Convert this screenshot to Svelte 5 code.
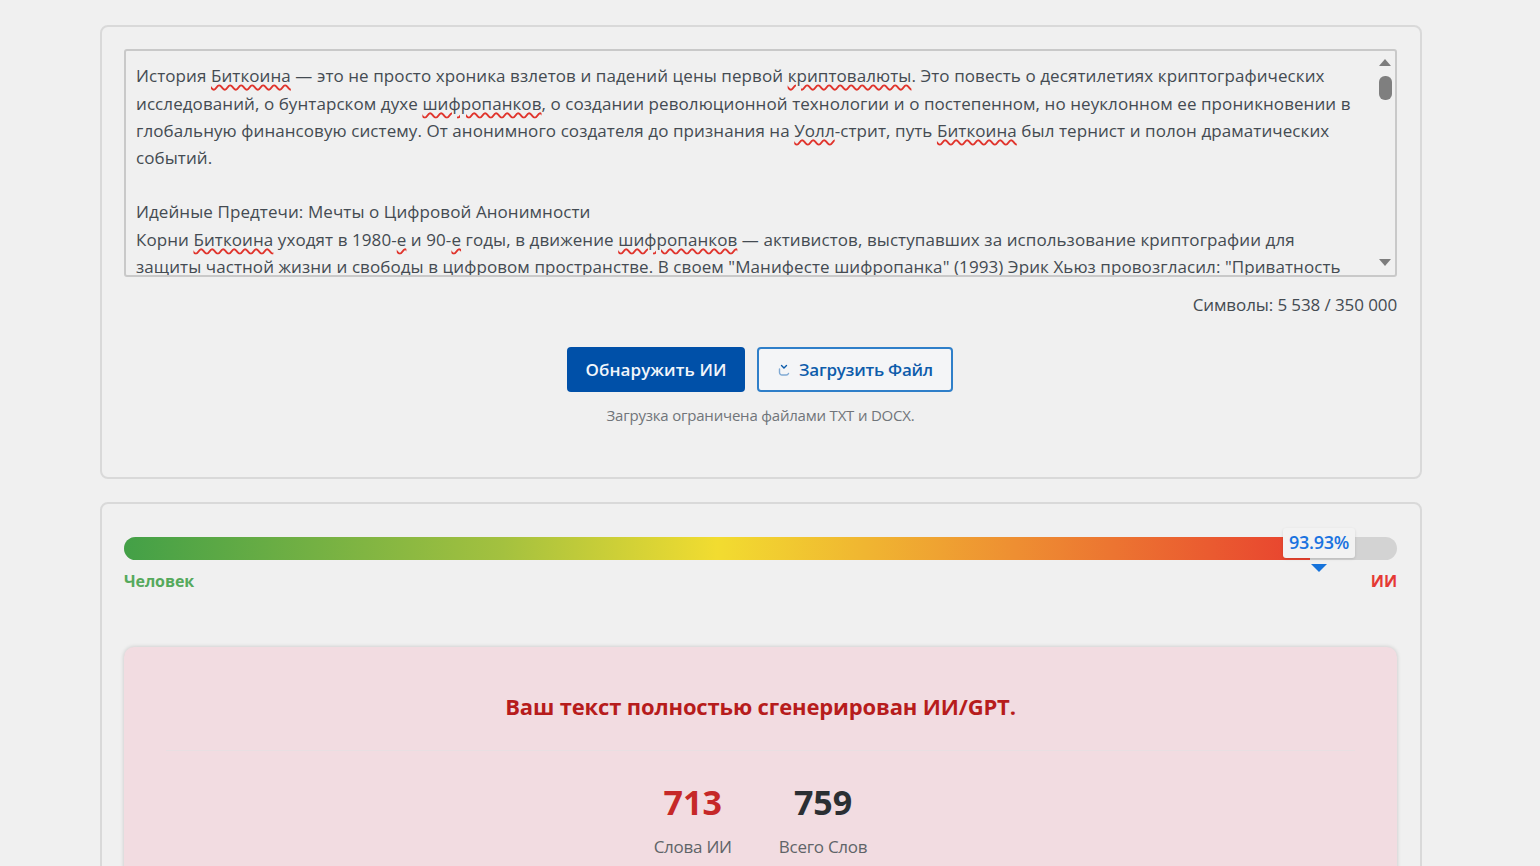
<script>
  const lines = [
    [['История '],['Биткоина',1],[' — это не просто хроника взлетов и падений цены первой '],['криптовалюты',1],['. Это повесть о десятилетиях криптографических']],
    [['исследований, о бунтарском духе '],['шифропанков',1],[', о создании революционной технологии и о постепенном, но неуклонном ее проникновении в']],
    [['глобальную финансовую систему. От анонимного создателя до признания на '],['Уолл',1],['-стрит, путь '],['Биткоина',1],[' был тернист и полон драматических']],
    [['событий.']],
    [['\u00a0']],
    [['Идейные Предтечи: Мечты о Цифровой Анонимности']],
    [['Корни '],['Биткоина',1],[' уходят в 1980-'],['е',1],[' и 90-'],['е',1],[' годы, в движение '],['шифропанков',1],[' — активистов, выступавших за использование криптографии для']],
    [['защиты частной жизни и свободы в цифровом пространстве. В своем "Манифесте шифропанка" (1993) Эрик Хьюз провозгласил: "Приватность']]
  ];
</script>

<main class="page">
  <section class="card first">
    <div class="editor">
      <div class="text">
        {#each lines as line}
          <div class="line">{#each line as part}{#if part[1]}<span class="typo">{part[0]}</span>{:else}{part[0]}{/if}{/each}</div>
        {/each}
      </div>
      <div class="scrollbar">
        <span class="arrow up"></span>
        <span class="thumb"></span>
        <span class="spacer"></span>
        <span class="arrow down"></span>
      </div>
    </div>
    <div class="count">Символы: 5 538 / 350 000</div>
    <div class="actions">
      <button class="primary">Обнаружить ИИ</button>
      <button class="secondary">
        <svg width="14" height="14" viewBox="0 0 14 14" fill="none" stroke-width="1.4" stroke-linecap="round">
          <path d="M4.500 2.500l2.500 2.500 2.500-2.500" stroke="#0d5cab" />
          <path d="M2.500 6v3.500a2.500 2.500 0 0 0 2.500 2.500h4a2.500 2.500 0 0 0 2.500-1.500" stroke="#7fa9d4" />
        </svg>
        Загрузить Файл
      </button>
    </div>
    <p class="hint">Загрузка ограничена файлами TXT и DOCX.</p>
  </section>

  <section class="card second">
    <div class="meter">
      <div class="track"><div class="fill"></div></div>
      <div class="badge">93.93%</div>
      <div class="pointer"></div>
    </div>
    <div class="ends">
      <span class="human">Человек</span>
      <span class="ai">ИИ</span>
    </div>
    <div class="result">
      <h2>Ваш текст полностью сгенерирован ИИ/GPT.</h2>
      <div class="stats">
        <div class="stat"><strong class="red">713</strong><span>Слова ИИ</span></div>
        <div class="stat"><strong>759</strong><span>Всего Слов</span></div>
      </div>
    </div>
  </section>
</main>

<style>
  :global(body) {
    margin: 0;
    background: #f0f0f0;
    overflow: hidden;
  }
  .page {
    box-sizing: border-box;
    height: 866px;
    overflow: hidden;
    padding: 25px 118px 0 100px;
    display: flex;
    flex-direction: column;
    gap: 23px;
    font-family: "Open Sans", "Noto Sans", sans-serif;
    color: #444b52;
  }
  .card {
    box-sizing: border-box;
    border: 2px solid #d9d9d9;
    border-radius: 8px;
    padding: 22px 23px 0 22px;
    background: #f0f0f0;
    flex: none;
  }
  .first { height: 454px; }
  .second { height: 500px; padding-top: 33px; }
  .editor {
    box-sizing: border-box;
    height: 228px;
    border: 2px solid #c9c9c9;
    border-radius: 3px;
    display: flex;
    overflow: hidden;
  }
  .text {
    flex: 1;
    min-width: 0;
    padding: 11.3px 0 0 10px;
    font-size: 17px;
    line-height: 27.2px;
    overflow: hidden;
    letter-spacing: 0.08px;
  }
  .line { white-space: nowrap; }
  .typo {
    text-decoration: underline wavy #e0342c 1.5px;
    text-underline-offset: 2px;
  }
  .scrollbar {
    flex: none;
    width: 20px;
    display: flex;
    flex-direction: column;
    align-items: center;
    padding: 8px 0 9px;
    box-sizing: border-box;
  }
  .arrow {
    width: 0;
    height: 0;
    border-left: 6px solid transparent;
    border-right: 6px solid transparent;
  }
  .up { border-bottom: 7px solid #7d7d7d; }
  .down { border-top: 7px solid #7d7d7d; }
  .thumb {
    width: 13px;
    height: 24px;
    margin-top: 10px;
    border-radius: 6px;
    background: #7f7f7f;
  }
  .spacer { flex: 1; }
  .count {
    margin-top: 16px;
    text-align: right;
    font-size: 17px;
    line-height: 24px;
    letter-spacing: -0.1px;
  }
  .actions {
    margin-top: 30px;
    display: flex;
    justify-content: center;
    gap: 12px;
    padding-right: 1px;
  }
  button {
    box-sizing: border-box;
    height: 45px;
    border-radius: 4px;
    font: 600 17px "Open Sans", "Noto Sans", sans-serif;
    cursor: pointer;
  }
  .primary {
    width: 178px;
    background: #0050a8;
    color: #f2f6fb;
    border: none;
    letter-spacing: 0.1px;
  }
  .secondary {
    width: 196px;
    background: #f4f5f7;
    color: #0d5cab;
    border: 2px solid #2f7fc9;
    display: flex;
    align-items: center;
    justify-content: center;
    gap: 8px;
    letter-spacing: -0.25px;
  }
  .hint {
    margin: 12px 0 0;
    text-align: center;
    font-size: 15px;
    line-height: 22px;
    color: #70757a;
    letter-spacing: -0.2px;
  }
  .meter {
    position: relative;
    height: 23px;
  }
  .track {
    height: 23px;
    border-radius: 12px;
    background: #d3d3d3;
    overflow: hidden;
  }
  .fill {
    width: 93.2%;
    height: 100%;
    background: linear-gradient(90deg, #43a047 0%, #a4c13f 32%, #f2dc30 50%, #ee8f32 75%, #e8402f 100%);
  }
  .badge {
    position: absolute;
    left: 1159px;
    top: -9px;
    width: 72px;
    height: 30px;
    box-sizing: border-box;
    padding-top: 2px;
    text-align: center;
    font-size: 18px;
    font-weight: 600;
    line-height: 24px;
    letter-spacing: -0.3px;
    color: #1a73e0;
    background: #f2f2f2;
    border-radius: 3px;
    box-shadow: 0 1px 3px rgba(0, 0, 0, 0.12);
  }
  .pointer {
    position: absolute;
    left: 1187px;
    top: 27px;
    width: 0;
    height: 0;
    border-left: 8px solid transparent;
    border-right: 8px solid transparent;
    border-top: 8px solid #1673db;
  }
  .ends {
    display: flex;
    justify-content: space-between;
    margin-top: 8px;
    font-size: 16px;
    font-weight: 700;
    line-height: 26px;
    letter-spacing: -0.1px;
  }
  .human { color: #55a95c; }
  .ai { color: #e53935; }
  .result {
    margin-top: 53px;
    background: #f2dce1;
    border-radius: 10px;
    box-shadow: 0 0 4px rgba(0, 0, 0, 0.18);
    height: 300px;
    padding: 0 42px;
    text-align: center;
  }
  h2 {
    margin: 0;
    padding: 42px 0 27px;
    font-size: 22px;
    font-weight: 700;
    line-height: 34px;
    letter-spacing: -0.15px;
    color: #b71c1c;
    border-bottom: 1px solid #e9dfe2;
  }
  .stats {
    display: flex;
    justify-content: center;
    gap: 47px;
    margin-top: 30px;
  }
  .stat {
    display: flex;
    flex-direction: column;
    align-items: center;
    gap: 12px;
  }
  .stat strong {
    font-size: 34px;
    line-height: 42px;
    font-weight: 700;
    color: #2b2f33;
  }
  .stat strong.red { color: #c62828; }
  .stat span {
    font-size: 17px;
    line-height: 24px;
    color: #5f6468;
    letter-spacing: -0.25px;
  }
</style>
